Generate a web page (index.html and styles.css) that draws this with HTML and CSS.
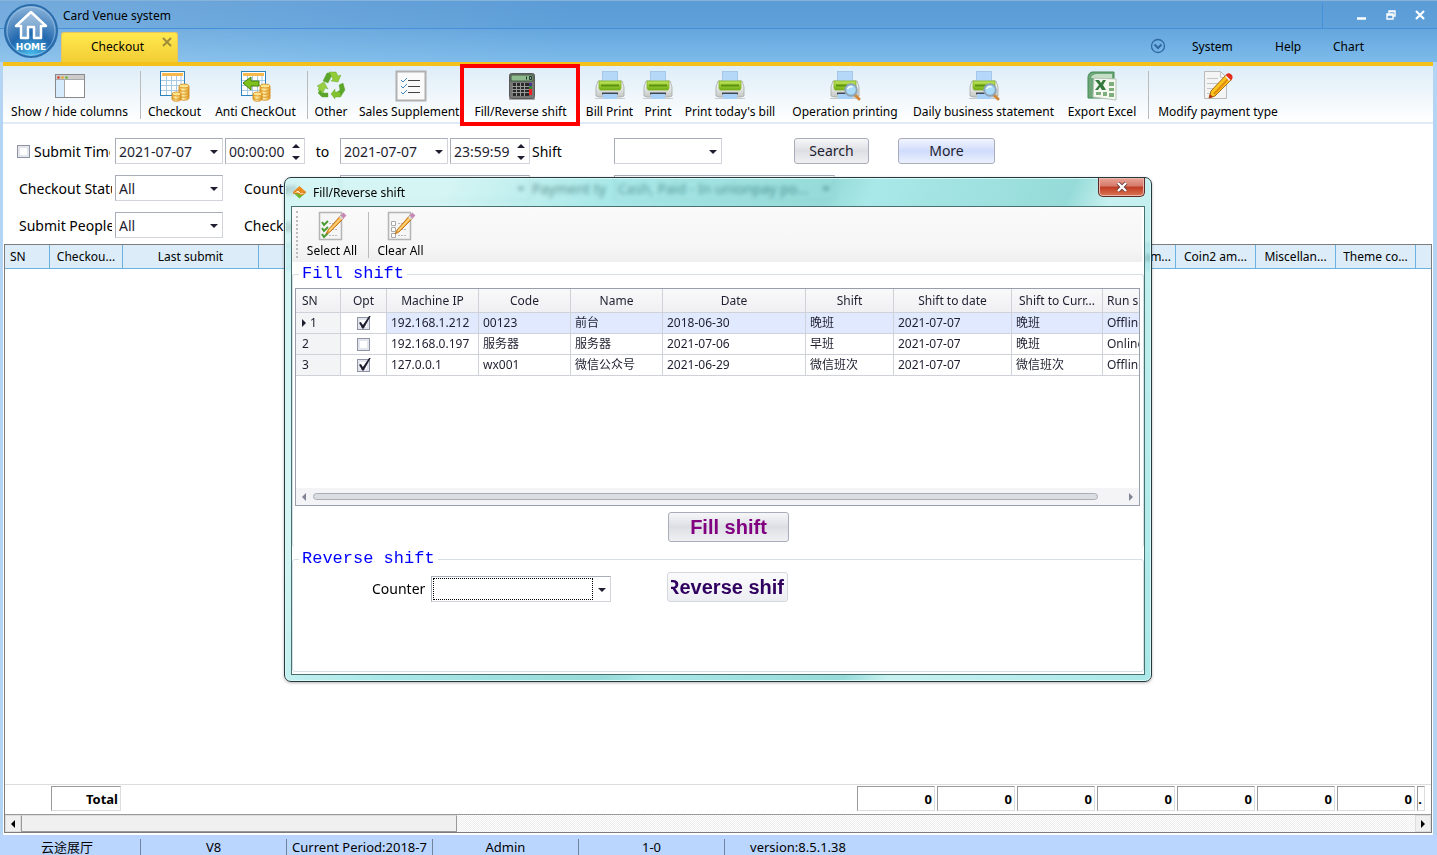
FILE: index.html
```
<!DOCTYPE html>
<html lang="en">
<head>
    <meta charset="utf-8">
    <title>Card Venue system</title>
    <link rel="stylesheet" href="styles.css">
</head>
<body>
    <!-- shared icon shapes -->
    <svg class="defs" width="0" height="0">
        <defs>
            <linearGradient id="gGreen" x1="0" y1="0" x2="0" y2="1"><stop offset="0" stop-color="#c4e65c"/><stop offset="1" stop-color="#6fae12"/></linearGradient>
            <linearGradient id="gGrey" x1="0" y1="0" x2="0" y2="1"><stop offset="0" stop-color="#fff"/><stop offset="1" stop-color="#c4c8c4"/></linearGradient>
            <linearGradient id="gGold" x1="0" y1="0" x2="1" y2="0"><stop offset="0" stop-color="#e8a52c"/><stop offset=".4" stop-color="#fff0a8"/><stop offset="1" stop-color="#e39a22"/></linearGradient>
            <radialGradient id="gHome" cx=".5" cy="1" r="1"><stop offset="0" stop-color="#4cc3f0"/><stop offset=".45" stop-color="#2168ae"/><stop offset="1" stop-color="#8fb6dc"/></radialGradient>
            <symbol id="sheet" viewBox="0 0 32 32">
                <rect x="1.500" y="1.500" width="24" height="24" fill="#fff" stroke="#2e83bd"/>
                <path d="M3 4.500h21" stroke="#f8b84c" stroke-width="3"/>
                <path d="M7.500 6v19M12.500 6v19M17.500 6v19M22 6v19M2 10.500h23M2 15.500h23M2 20.500h23" stroke="#a8cbe4"/>
            </symbol>
            <symbol id="coins" viewBox="0 0 32 32">
                <path d="M20 16v12c0 3 10 3 10 0v-12z" fill="url(#gGold)" stroke="#d28a1c" stroke-width=".8"/>
                <ellipse cx="25" cy="16" rx="5" ry="2" fill="#ffe48c" stroke="#d28a1c" stroke-width=".8"/>
                <path d="M20 19c0 3 10 3 10 0M20 22c0 3 10 3 10 0M20 25c0 3 10 3 10 0" fill="none" stroke="#d28a1c" stroke-width=".8"/>
                <path d="M13 24v5c0 3 9 3 9 0v-5z" fill="url(#gGold)" stroke="#d28a1c" stroke-width=".8"/>
                <ellipse cx="17.500" cy="24" rx="4.500" ry="2" fill="#ffe48c" stroke="#d28a1c" stroke-width=".8"/>
                <path d="M13 27c0 3 9 3 9 0" fill="none" stroke="#d28a1c" stroke-width=".8"/>
            </symbol>
            <symbol id="printer" viewBox="0 0 32 32">
                <path d="M1 28.500h30" stroke="#c4ccd2"/>
                <path d="M4 11h24l2 6v9l-3 1h-22l-3-1v-9z" fill="url(#gGrey)" stroke="#a4a9a4" stroke-width=".8"/>
                <rect x="8.500" y="1.500" width="15" height="11" fill="#b5d7f8" stroke="#9cc2e8" stroke-width=".8"/>
                <path d="M5 11h22v7l-1 2h-20l-1-2z" fill="url(#gGreen)" stroke="#7db022" stroke-width=".8"/>
                <path d="M7 15.500h18" stroke="#5b930c" stroke-width="2"/>
                <path d="M8 22.500h16v2h-16z" fill="#3d4854"/>
                <path d="M9 24h14v5h-14z" fill="#a9d0f6"/>
            </symbol>
            <symbol id="lens" viewBox="0 0 32 32">
                <path d="M26 25l4 4" stroke="#d0893c" stroke-width="3" stroke-linecap="round"/>
                <circle cx="22" cy="20" r="5.800" fill="#a8dcfa" stroke="#8ea5b8" stroke-width="2"/>
                <path d="M18.500 19c1-2 3-3 5-2" stroke="#fff" stroke-width="1.500" fill="none"/>
            </symbol>
            <symbol id="pencil" viewBox="0 0 32 32">
                <path d="M12 20l13-15 3 3-14 14-4 2z" fill="#f5a52c" stroke="#b56b16" stroke-width=".8"/>
                <path d="M13 21l13-14" stroke="#ffd88a" stroke-width="1.200"/>
                <path d="M23 7l2-2 3 3-2 2z" fill="#d8d8d8"/>
            </symbol>
        </defs>
    </svg>

    <header class="header">
        <div class="titlebar">
            <h1>Card Venue system</h1>
            <div class="window-buttons">
                <button aria-label="Minimize"><svg width="12" height="12"><path d="M1 9.500h9" stroke="#fff" stroke-width="2.500"/></svg></button>
                <button aria-label="Restore"><svg width="12" height="12"><path d="M4 4v-2h6v5h-2M3.500 2.500h6M2 5h6v5h-6zM2 6h6" stroke="#fff" stroke-width="1.400" fill="none"/></svg></button>
                <button aria-label="Close"><svg width="12" height="12"><path d="M2 2l8 8M10 2l-8 8" stroke="#fff" stroke-width="2.200"/></svg></button>
            </div>
        </div>
        <div class="tabbar">
            <div class="tab">
                <span>Checkout</span>
                <button class="tab-close" aria-label="Close tab"><svg width="10" height="10"><path d="M1 1l8 8M9 1l-8 8" stroke="#a18c3a" stroke-width="2"/></svg></button>
            </div>
            <nav class="menu">
                <svg width="16" height="16"><circle cx="8" cy="8" r="6.500" fill="none" stroke="#2f689f" stroke-width="1.300"/><path d="M4.500 6.500l3.500 3.500 3.500-3.500" fill="none" stroke="#2f689f" stroke-width="2"/></svg>
                <a href="#">System</a>
                <a href="#">Help</a>
                <a href="#">Chart</a>
            </nav>
        </div>
        <button class="home" aria-label="Home">
            <svg width="56" height="56" viewBox="0 0 56 56">
                <circle cx="28" cy="28" r="26" fill="url(#gHome)" stroke="#2b6cab" stroke-width="2"/>
                <circle cx="28" cy="28" r="24" fill="none" stroke="#a4cdec" stroke-opacity=".6"/>
                <path d="M28 9l15 14h-5v12h-7v-11h-6v11h-7v-12h-5z" fill="#fff" fill-opacity=".35" stroke="#fff" stroke-width="2.500" stroke-linejoin="round"/>
                <text x="28" y="47" text-anchor="middle">HOME</text>
            </svg>
        </button>
    </header>

    <main class="workspace">
        <div class="toolbar">
            <button class="tool tool-sep">
                <svg width="32" height="32" viewBox="0 0 32 32"><rect x="1.500" y="4.500" width="29" height="23" fill="#fff" stroke="#8a8a8a"/><path d="M2 5h28v4h-28z" fill="#ccc"/><path d="M2 10h8v17h-8z" fill="#d6ecfc"/><path d="M10.500 10v17M2 9.500h28" stroke="#aaa"/><circle cx="4.500" cy="7.500" r="1.300" fill="#dc3a2c"/><circle cx="8.500" cy="7.500" r="1.300" fill="#eba72c"/><circle cx="12.500" cy="7.500" r="1.300" fill="#69b52c"/></svg>
                <span>Show / hide columns</span>
            </button>
            <button class="tool">
                <svg width="32" height="32"><use href="#sheet"/><use href="#coins"/></svg>
                <span>Checkout</span>
            </button>
            <button class="tool tool-sep">
                <svg width="32" height="32"><use href="#sheet"/><use href="#coins"/><path d="M3 13l8-6v4h8v5h-8v4z" fill="#7ec01c" stroke="#44800c"/></svg>
                <span>Anti CheckOut</span>
            </button>
            <button class="tool">
                <svg width="32" height="32" viewBox="0 0 32 32"><g stroke="#5aa52a" stroke-width=".4"><path d="M8 11l4-8h6l-5 10z" fill="#5aa52a"/><path d="M14 2h7l2 4 3-1-3 7-7-1 2-2z" fill="#91cc38"/><path d="M24 15l4-2 2 7-4 6-5-3 4-3z" fill="#5aa52a"/><path d="M26 27h-6v2l-4-5 4-5v3h5z" fill="#82c22c"/><path d="M3 20l1-3-2-1 7-4 4 7-3-1-2 5z" fill="#98cf40"/><path d="M5 20l2 3h6v4h-6l-4-4z" fill="#5aa52a"/></g></svg>
                <span>Other</span>
            </button>
            <button class="tool tool-clip">
                <svg width="32" height="32" viewBox="0 0 32 32"><rect x="1.500" y="1.500" width="29" height="29" fill="#fafafa" stroke="#b0b0b0" stroke-width="2"/><path d="M13 10.500h12M13 16.500h12M13 22.500h12" stroke="#444"/><path d="M6 10l2 2 4-4M6 16l2 2 4-4M6 22l2 2 4-4" stroke="#4387bf" fill="none"/></svg>
                <span>Sales Supplement</span>
            </button>
            <button class="tool tool-active">
                <svg width="32" height="32" viewBox="0 0 32 32"><path d="M4 29h26" stroke="#aaa" stroke-width="2"/><rect x="4.500" y="3.500" width="25" height="25" rx="2" fill="#777" stroke="#5a5a5a"/><rect x="6" y="5" width="22" height="6" fill="#8fba8e" stroke="#415c42"/><path d="M21.500 6.500v3M24.500 6.500h2v3h-2z" stroke="#233" fill="none"/><path d="M8 13h16v13h-16z" fill="#292929"/><path d="M7 16.500h17M7 19.500h17M7 22.500h17M11.500 13v13M15.500 13v13M19.500 13v13" stroke="#999"/><path d="M24 13h3v3h-3z" fill="#438"/><path d="M24 16h3v3h-3z" fill="#383"/><path d="M24 19h3v6h-3z" fill="#e22"/></svg>
                <span>Fill/Reverse shift</span>
            </button>
            <button class="tool"><svg width="32" height="32"><use href="#printer"/></svg><span>Bill Print</span></button>
            <button class="tool"><svg width="32" height="32"><use href="#printer"/></svg><span>Print</span></button>
            <button class="tool"><svg width="32" height="32"><use href="#printer"/></svg><span>Print today's bill</span></button>
            <button class="tool"><svg width="32" height="32"><use href="#printer"/><use href="#lens"/></svg><span>Operation printing</span></button>
            <button class="tool"><svg width="32" height="32"><use href="#printer"/><use href="#lens"/></svg><span>Daily business statement</span></button>
            <button class="tool tool-sep">
                <svg width="32" height="32" viewBox="0 0 32 32"><path d="M7 2h21v26h-26v-20c0-4 2-6 5-6z" fill="#6da779" stroke="#438951"/><path d="M5 8c1-3 3-4 6-4h15v4z" fill="#c5dfc7"/><path d="M8 8l22 1v21l-23-3z" fill="#f4f8f0" stroke="#b8c5b8"/><path d="M9 10h4l2 3 2-3h3l-3 5 3 5h-4l-2-3-2 3h-3l4-5z" fill="#33783c"/><path d="M23 12h5v4h-5zM23 18h5v3h-5zM23 23h5v4h-5zM17 22h4v4h-4zM10 22h5v3h-5z" fill="#7eae7c"/></svg>
                <span>Export Excel</span>
            </button>
            <button class="tool">
                <svg width="32" height="32" viewBox="0 0 32 32"><path d="M2.500 1.500h16l6 6v21h-22z" fill="#f4f4f4" stroke="#bbb"/><path d="M18.500 1.500v6h6M5 8.500h11M5 13.500h12M5 18.500h8M5 23.500h5" stroke="#c5c5c5" fill="none"/><path d="M9 21l15-16 5 5-16 16-6 2z" fill="#fac51c" stroke="#a86c14"/><path d="M12 24l15-16" stroke="#e28c10" stroke-width="2"/><path d="M8 24l-1 4 4-1z" fill="#b32a18"/><path d="M23 6l2-1 4 4-2 2z" fill="#eee"/><path d="M25 5c2-2 6 1 4 4z" fill="#e32d1c" stroke="#e32d1c" stroke-width="2"/></svg>
                <span>Modify payment type</span>
            </button>
        </div>

        <form class="filters">
            <div class="filter-row">
                <label class="check-label"><input type="checkbox"><span>Submit Time</span></label>
                <span class="field combo"><input type="text" value="2021-07-07" aria-label="From date"></span>
                <span class="field spin"><input type="text" value="00:00:00" aria-label="From time"></span>
                <span class="to">to</span>
                <span class="field combo"><input type="text" value="2021-07-07" aria-label="To date"></span>
                <span class="field spin"><input type="text" value="23:59:59" aria-label="To time"></span>
                <label for="shift">Shift</label>
                <span class="field combo"><select id="shift"><option></option></select></span>
                <button type="button" class="btn search">Search</button>
                <button type="button" class="btn btn-blue">More</button>
            </div>
            <div class="filter-row">
                <label class="indent" for="status">Checkout Status</label>
                <span class="field combo"><select id="status"><option>All</option></select></span>
                <label class="second" for="counterFilter">Counter</label>
                <span class="field combo span-two"><select id="counterFilter"><option></option></select></span>
                <label for="payment">Payment ty</label>
                <span class="field combo span-wide"><select id="payment"><option>Cash, Paid - In unionpay po...</option></select></span>
            </div>
            <div class="filter-row">
                <label class="indent" for="people">Submit People</label>
                <span class="field combo"><select id="people"><option>All</option></select></span>
                <span class="second">Checkout</span>
            </div>
        </form>

        <section class="records">
            <table class="records-table">
                <colgroup>
                    <col class="c-sn"><col class="c-checkout"><col class="c-last"><col>
                    <col class="c-amount"><col class="c-amount"><col class="c-amount"><col class="c-amount"><col class="c-end">
                </colgroup>
                <thead>
                    <tr><th class="left">SN</th><th>Checkou...</th><th>Last submit</th><th></th><th class="right">Coin am...</th><th>Coin2 am...</th><th>Miscellan...</th><th>Theme co...</th><th></th></tr>
                </thead>
            </table>
            <div class="totals">
                <span class="total-box total-name">Total</span>
                <span class="total-box push">0</span>
                <span class="total-box">0</span>
                <span class="total-box">0</span>
                <span class="total-box">0</span>
                <span class="total-box">0</span>
                <span class="total-box">0</span>
                <span class="total-box">0</span>
                <span class="total-box total-end">.</span>
            </div>
            <div class="scrollbar">
                <button aria-label="Scroll left"><i class="arrow arrow-left"></i></button>
                <div class="scroll-thumb"></div>
                <button aria-label="Scroll right"><i class="arrow arrow-right"></i></button>
            </div>
        </section>
    </main>

    <footer class="statusbar">
        <span>云途展厅</span>
        <span>V8</span>
        <span>Current Period:2018-7</span>
        <span>Admin</span>
        <span>1-0</span>
        <span>version:8.5.1.38</span>
    </footer>

    <div class="overlay">
        <div class="dialog" role="dialog" aria-labelledby="dialogTitle">
            <div class="dialog-title">
                <svg width="15" height="15" viewBox="0 0 15 15"><path d="M7.500 1l6.500 6h-13z" fill="#e88c20"/><path d="M1 7.500h13l-6.500 6z" fill="#72b52c"/><path d="M1 8l5-3 3 3 5-1-4 3-4-2z" fill="#fff3c4" stroke="#e87b18"/></svg>
                <h2 id="dialogTitle">Fill/Reverse shift</h2>
                <button class="dialog-close" aria-label="Close"><svg width="12" height="10"><path d="M2 1l8 8M10 1l-8 8" stroke="#6b3a38" stroke-width="4"/><path d="M2 1l8 8M10 1l-8 8" stroke="#fff" stroke-width="2.400"/></svg></button>
            </div>
            <div class="dialog-body">
                <div class="dialog-tools">
                    <button class="tool">
                        <svg width="32" height="32" viewBox="0 0 32 32"><path d="M3.500 2.500h22v27h-22z" fill="#f6f6f6" stroke="#b5b5b5" stroke-width="1.500"/><path d="M13 13.500h9M13 19.500h9M13 25.500h9" stroke="#bbb" stroke-dasharray="2 1"/><path d="M6 12l2 3 4-4M6 18l2 3 4-4M6 24l2 3 4-4" stroke="#4a9a30" stroke-width="2" fill="none"/><use href="#pencil"/><path d="M26 4l3 3" stroke="#c88ab4" stroke-width="4"/></svg>
                        <span>Select All</span>
                    </button>
                    <button class="tool">
                        <svg width="32" height="32" viewBox="0 0 32 32"><path d="M3.500 2.500h22v27h-22z" fill="#f6f6f6" stroke="#b5b5b5" stroke-width="1.500"/><path d="M13 13.500h9M13 19.500h9M13 25.500h9" stroke="#bbb" stroke-dasharray="2 1"/><path d="M6.500 11.500h4v4h-4zM6.500 17.500h4v4h-4zM6.500 23.500h4v4h-4z" stroke="#aaa" fill="#fff"/><use href="#pencil"/><path d="M26 4l3 3" stroke="#c88ab4" stroke-width="4"/></svg>
                        <span>Clear All</span>
                    </button>
                </div>
                <fieldset class="group group-fill">
                    <legend>Fill shift</legend>
                    <div class="grid-box">
                        <table class="shift-table">
                            <colgroup>
                                <col class="w-sn"><col class="w-opt"><col class="w-text"><col class="w-text"><col class="w-text"><col class="w-date"><col class="w-shift"><col class="w-to"><col class="w-cur"><col>
                            </colgroup>
                            <thead>
                                <tr><th class="left">SN</th><th>Opt</th><th>Machine IP</th><th>Code</th><th>Name</th><th>Date</th><th>Shift</th><th>Shift to date</th><th>Shift to Curr...</th><th class="run">Run s</th></tr>
                            </thead>
                            <tbody>
                                <tr class="selected"><th class="current">1</th><td class="opt"><input type="checkbox" aria-label="Row 1" checked></td><td>192.168.1.212</td><td>00123</td><td>前台</td><td>2018-06-30</td><td>晚班</td><td>2021-07-07</td><td>晚班</td><td>Offline</td></tr>
                                <tr><th>2</th><td class="opt"><input type="checkbox" aria-label="Row 2"></td><td>192.168.0.197</td><td>服务器</td><td>服务器</td><td>2021-07-06</td><td>早班</td><td>2021-07-07</td><td>晚班</td><td>Online</td></tr>
                                <tr><th>3</th><td class="opt"><input type="checkbox" aria-label="Row 3" checked></td><td>127.0.0.1</td><td>wx001</td><td>微信公众号</td><td>2021-06-29</td><td>微信班次</td><td>2021-07-07</td><td>微信班次</td><td>Offline</td></tr>
                            </tbody>
                        </table>
                        <div class="grid-scroll">
                            <i class="arrow arrow-left"></i>
                            <div class="grid-thumb"></div>
                            <i class="arrow arrow-right"></i>
                        </div>
                    </div>
                    <button class="btn btn-big btn-fill">Fill shift</button>
                </fieldset>
                <fieldset class="group group-reverse">
                    <legend>Reverse shift</legend>
                    <div class="reverse-row">
                        <label for="counter">Counter</label>
                        <span class="field combo focused"><select id="counter"><option></option></select></span>
                        <button class="btn btn-big btn-reverse"><span>Reverse shift</span></button>
                    </div>
                </fieldset>
            </div>
        </div>
    </div>
</body>
</html>
```
FILE: styles.css
```
* {
    box-sizing: border-box;
}
body {
    margin: 0;
    min-height: 100vh;
    display: flex;
    flex-direction: column;
    position: relative;
    overflow: hidden;
    background: #b4d4f4;
    font-family: "Noto Sans", "Noto Sans CJK SC", sans-serif;
    font-size: 12px;
    color: #000;
}
button, input, select {
    font: inherit;
    color: inherit;
    margin: 0;
}
button {
    border: none;
    background: none;
    padding: 0;
}
svg {
    display: block;
    flex: none;
}
.defs {
    position: absolute;
}

/* header */
.header {
    position: relative;
    background: linear-gradient(100deg, rgba(255, 255, 255, .15), rgba(255, 255, 255, 0) 40%), linear-gradient(#5b9bd6, #60a1da 28px, #64a5dc 28px, #7cbbea 62px);
}
.titlebar {
    display: flex;
    justify-content: space-between;
    height: 29px;
    padding: 2px 0 0 63px;
    border-top: 1px solid #85b3dc;
    border-bottom: 1px solid #4490da;
}
.titlebar h1 {
    margin: 0;
    font-size: 12px;
    font-weight: normal;
    line-height: 26px;
}
.window-buttons {
    display: flex;
    align-items: center;
    gap: 17px;
    padding: 0 11px 2px 33px;
    border-left: 1px solid #4490da;
}
.tabbar {
    display: flex;
    justify-content: space-between;
    align-items: flex-end;
    height: 33px;
    padding-left: 61px;
}
.tab {
    position: relative;
    width: 117px;
    height: 30px;
    padding-right: 4px;
    line-height: 28px;
    text-align: center;
    background: linear-gradient(#ffe94e, #f3cd35);
    border: 1px solid #e9c65a;
    border-bottom: none;
    border-radius: 3px 3px 0 0;
}
.tab-close {
    position: absolute;
    top: 4px;
    right: 5px;
}
.menu {
    display: flex;
    align-items: center;
    height: 32px;
    padding-right: 72px;
}
.menu a {
    color: #000;
    text-decoration: none;
    width: 58px;
}
.menu a:first-of-type {
    width: 83px;
    margin-left: 26px;
}
.menu a:last-of-type {
    width: 32px;
}
.home {
    position: absolute;
    left: 3px;
    top: 3px;
}
.home text {
    font: bold 9px "DejaVu Sans", sans-serif;
    fill: #fff;
}

/* toolbar */
.workspace {
    flex: 1;
    display: flex;
    flex-direction: column;
    margin: 0 4px 0 3px;
    border-top: 4px solid #f4c01c;
    background: #fff;
}
.toolbar {
    display: grid;
    grid-template-columns: 138px 67px 100px 46px 107px 119px 59px 38px 106px 124px 153px 89px 138px;
    height: 58px;
    background: linear-gradient(#deedf8, #fff);
    border-bottom: 2px solid #dfebf6;
}
.tool {
    position: relative;
    display: flex;
    flex-direction: column;
    align-items: center;
    padding-top: 4px;
    white-space: nowrap;
    line-height: 20px;
}
.tool-sep {
    padding-right: 5px;
}
.tool-sep::after {
    content: "";
    position: absolute;
    top: 5px;
    bottom: 3px;
    right: 0;
    border-right: 1px solid #bbb;
}
.tool-clip {
    overflow: hidden;
    padding-left: 5px;
    align-items: flex-start;
}
.tool-clip svg {
    margin-left: 36px;
}
.tool-active::after {
    content: "";
    position: absolute;
    inset: -2px 0 -4px -1px;
    border: 4px solid #f00;
    z-index: 1;
}

/* filters */
.filters {
    display: flex;
    flex-direction: column;
    gap: 11px;
    height: 120px;
    padding-top: 14px;
    font-size: 14px;
}
.filter-row {
    display: grid;
    grid-template-columns: 110px 108px 80px 31px 108px 80px 80px 108px 68px 75px 25px 97px;
    column-gap: 2px;
    align-items: center;
    height: 26px;
}
.filter-row label {
    white-space: nowrap;
    overflow: hidden;
}
.filter-row .indent {
    padding-left: 16px;
    width: 109px;
}
.filter-row .second {
    padding-left: 19px;
    grid-column: 3 / 5;
}
.span-two {
    grid-column: 5 / 7;
}
.span-wide {
    grid-column: 8 / 11;
    width: 221px;
}
.check-label {
    display: flex;
    align-items: center;
    gap: 4px;
    width: 107px;
    padding-left: 14px;
}
.to {
    text-align: center;
}
.search {
    grid-column: 10;
}
.filter-row .btn-blue {
    grid-column: 12;
}
input[type="checkbox"] {
    appearance: none;
    flex: none;
    position: relative;
    width: 13px;
    height: 13px;
    border: 1px solid #8e94a4;
    background: #fff;
    box-shadow: inset 0 0 0 2px #e4e6ee;
}
input[type="checkbox"]:checked::before {
    content: "";
    position: absolute;
    inset: -2px -2px 0 0;
    background: #1e1e30;
    clip-path: polygon(8% 55%, 22% 50%, 38% 74%, 88% 0, 100% 0, 44% 100%, 32% 100%);
}
.field {
    position: relative;
    display: block;
    height: 26px;
    background: #fff;
    border: 1px solid #a9adba;
    border-right-color: #d2d4dc;
    border-bottom-color: #d2d4dc;
}
.field input, .field select {
    appearance: none;
    display: block;
    width: 100%;
    height: 100%;
    padding: 0 3px;
    border: none;
    outline: none;
    background: transparent;
    color: #1e1e30;
}
.combo::after, .spin::before, .spin::after {
    content: "";
    position: absolute;
    right: 4px;
    top: 11px;
    border: 4px solid transparent;
    border-top-color: #1e1e30;
    border-bottom: none;
}
.spin::before {
    top: 5px;
    border-top: none;
    border-bottom: 4px solid #1e1e30;
}
.spin::after {
    top: 17px;
}
.btn {
    height: 26px;
    border: 1px solid #a9adba;
    border-radius: 3px;
    background: linear-gradient(#f7f7f9, #dddee4 50%, #e2e3e8 60%, #f0f0f3);
    color: #1e1e30;
    line-height: 24px;
}
.btn-blue {
    background: linear-gradient(#f2f5ff, #d0dcfc 50%, #d6e0fc 60%, #ecf1ff);
}

/* records */
.records {
    flex: 1;
    display: flex;
    flex-direction: column;
    margin: 0 1px 2px;
    border: 1px solid #7c7c7c;
}
.records-table {
    width: 100%;
    table-layout: fixed;
    border-collapse: separate;
    border-spacing: 0;
}
.records-table th {
    height: 24px;
    padding: 0;
    font-weight: normal;
    white-space: nowrap;
    background: #dcedf9;
    border-right: 1px solid #6bb2de;
    border-bottom: 1px solid #6bb2de;
}
.records-table .left {
    text-align: left;
    padding-left: 5px;
}
.records-table .right {
    text-align: right;
    padding-right: 4px;
}
.records-table th:last-child {
    border-right: none;
}
.c-sn { width: 45px; }
.c-checkout { width: 73px; }
.c-last { width: 136px; }
.c-amount { width: 80px; }
.c-end { width: 15px; }
.totals {
    display: flex;
    gap: 2px;
    height: 30px;
    margin-top: auto;
    padding: 1px 6px 3px 46px;
    border-top: 1px solid #ddd;
    font-size: 13px;
    font-weight: bold;
}
.total-box {
    width: 78px;
    padding-right: 2px;
    text-align: right;
    line-height: 24px;
    border: 1px solid #ddd;
    border-top-color: #999;
    border-left-color: #999;
}
.total-name {
    width: 70px;
}
.push {
    margin-left: auto;
}
.total-end {
    width: 8px;
}
.scrollbar {
    display: flex;
    height: 18px;
    border-top: 1px solid #999;
    background: repeating-conic-gradient(#eee 0 25%, #fff 0 50%) 0 0 / 2px 2px;
}
.scrollbar button {
    display: flex;
    align-items: center;
    justify-content: center;
    width: 16px;
    background: #f0f0f0;
    border: 1px solid #ddd;
}
.scrollbar button:last-child {
    margin-left: auto;
}
.scroll-thumb {
    width: 436px;
    background: #f0f0f0;
    border: 1px solid #999;
    border-top-color: #ddd;
}
.arrow {
    border: 4px solid transparent;
}
.arrow-left {
    border-right-color: #000;
    border-left: none;
}
.arrow-right {
    border-left-color: #000;
    border-right: none;
}

.statusbar {
    display: flex;
    height: 20px;
    padding-top: 4px;
    background: #bad6ff;
    overflow: hidden;
    font-size: 13px;
    line-height: 16px;
}
.statusbar span {
    width: 146px;
    text-align: center;
    white-space: nowrap;
    overflow: hidden;
    border-right: 1px solid #71849e;
}
.statusbar span:first-child {
    width: 141px;
    padding-right: 6px;
}
.statusbar span:last-child {
    border: none;
}

/* dialog */
.overlay {
    position: absolute;
    inset: 4px 1px 0 0;
    display: grid;
    place-items: center;
}
.dialog {
    width: 868px;
    padding: 0 6px 6px;
    border: 1px solid #26393c;
    border-radius: 7px;
    background: linear-gradient(115deg, rgba(190, 240, 238, .65) 15%, rgba(123, 220, 220, .65) 30%, rgba(94, 200, 196, .65) 50%, rgba(123, 220, 220, .65) 54%, rgba(94, 200, 196, .65) 72%, rgba(170, 234, 232, .65) 76%, rgba(123, 220, 220, .65));
    backdrop-filter: blur(2px);
    box-shadow: inset 0 0 0 1px #d8f8f7, 0 1px 3px rgba(0, 0, 0, .3);
}
.dialog-title {
    display: flex;
    align-items: center;
    gap: 6px;
    height: 28px;
    padding-left: 1px;
}
.dialog-title h2 {
    flex: 1;
    margin: 0;
    font-size: 12px;
    font-weight: normal;
}
.dialog-close {
    display: flex;
    align-items: center;
    justify-content: center;
    align-self: flex-start;
    width: 47px;
    height: 19px;
    border: 1px solid #5c2a28;
    border-top: none;
    border-radius: 0 0 5px 5px;
    background: linear-gradient(#e9a396, #d57a6a 45%, #bf3b22 50%, #d97654);
    box-shadow: inset 0 0 0 1px #edb6aa;
}
.dialog-body {
    height: 469px;
    border: 1px solid #47706f;
    background: #fff;
}
.dialog-tools {
    display: flex;
    height: 55px;
    margin-right: 2px;
    padding-left: 4px;
    background: linear-gradient(#fafafa, #f6f6f6 70%, #efefef);
}
.dialog-tools::before {
    content: "";
    margin: 4px 0;
    border-left: 2px dotted #bbb;
}
.dialog-tools .tool {
    width: 63px;
    padding-top: 3px;
    line-height: 18px;
}
.dialog-tools .tool:first-child {
    width: 71px;
    padding-right: 3px;
}
.dialog-tools .tool:first-child::after {
    content: "";
    position: absolute;
    top: 5px;
    bottom: 4px;
    right: 0;
    border-right: 1px solid #bbb;
}
.group {
    min-width: 0;
    margin: 0;
    padding: 0 3px 0 2px;
    border: 1px solid #d5dfe6;
    border-radius: 3px;
}
.group legend {
    margin-left: 4px;
    padding: 0 3px;
    font: 17px/24px "Liberation Mono", monospace;
    color: #00f;
}
.group-fill {
    height: 285px;
    border-bottom: none;
}
.group-reverse {
    height: 125px;
}
.grid-box {
    display: flex;
    flex-direction: column;
    height: 218px;
    margin-top: 2px;
    border: 1px solid #9a9eac;
    overflow: hidden;
}
.shift-table {
    width: 100%;
    table-layout: fixed;
    border-collapse: separate;
    border-spacing: 0;
    color: #1e1e30;
}
.shift-table th, .shift-table td {
    height: 21px;
    padding: 0 0 0 4px;
    border-right: 1px solid #d0d2da;
    border-bottom: 1px solid #d0d2da;
    font-weight: normal;
    line-height: 18px;
    text-align: left;
    white-space: nowrap;
    overflow: hidden;
}
.shift-table th {
    padding-left: 6px;
    background: #f3f4f6;
}
.shift-table thead th {
    height: 24px;
    padding: 0;
    text-align: center;
    background: linear-gradient(#f9f9fa, #f0f0f3);
}
.shift-table thead .left {
    padding-left: 6px;
    text-align: left;
}
.shift-table thead .run {
    padding-left: 4px;
    text-align: left;
}
.shift-table tr > :last-child {
    border-right: none;
}
.shift-table .selected td {
    background: #e0e9fd;
}
.shift-table .selected .opt, .opt {
    background: #fff;
}
.shift-table .opt {
    padding: 0;
}
.opt input {
    display: block;
    margin: 0 auto;
}
.current::before {
    content: "";
    display: inline-block;
    margin-right: 4px;
    border: 4px solid transparent;
    border-left-color: #1e1e30;
    border-right: none;
}
.w-sn { width: 45px; }
.w-opt { width: 46px; }
.w-text { width: 92px; }
.w-date { width: 143px; }
.w-shift { width: 88px; }
.w-to { width: 118px; }
.w-cur { width: 91px; }
.grid-scroll {
    display: flex;
    align-items: center;
    gap: 7px;
    height: 17px;
    margin-top: auto;
    padding: 0 6px;
    background: #f4f4f6;
}
.grid-scroll .arrow-left {
    border-right-color: #808494;
}
.grid-scroll .arrow-right {
    margin-left: auto;
    border-left-color: #808494;
}
.grid-thumb {
    width: 785px;
    height: 7px;
    border: 1px solid #a9adb8;
    border-radius: 4px;
    background: #dcdde2;
}
.btn-big {
    width: 121px;
    height: 30px;
    padding: 0 3px;
    font: bold 20px/28px "Liberation Sans", sans-serif;
}
.btn-fill {
    display: block;
    margin: 6px 0 0 373px;
    color: #800080;
}
.reverse-row {
    display: flex;
    align-items: center;
    margin: 1px 0 0 77px;
    font-size: 14px;
}
.reverse-row .field {
    width: 180px;
    margin: 3px 56px 0 6px;
}
.reverse-row label {
    padding-top: 3px;
}
.focused select {
    width: 160px;
    height: 22px;
    margin: 1px;
    border: 1px dotted #000;
}
.btn-reverse {
    display: flex;
    justify-content: center;
    overflow: hidden;
    border-color: #d5d7de;
    background: linear-gradient(#fbfbfc, #edeef2);
    color: #300060;
}
.btn-reverse span {
    flex: none;
    width: 113px;
    display: flex;
    justify-content: center;
    overflow: hidden;
    white-space: nowrap;
}
```
